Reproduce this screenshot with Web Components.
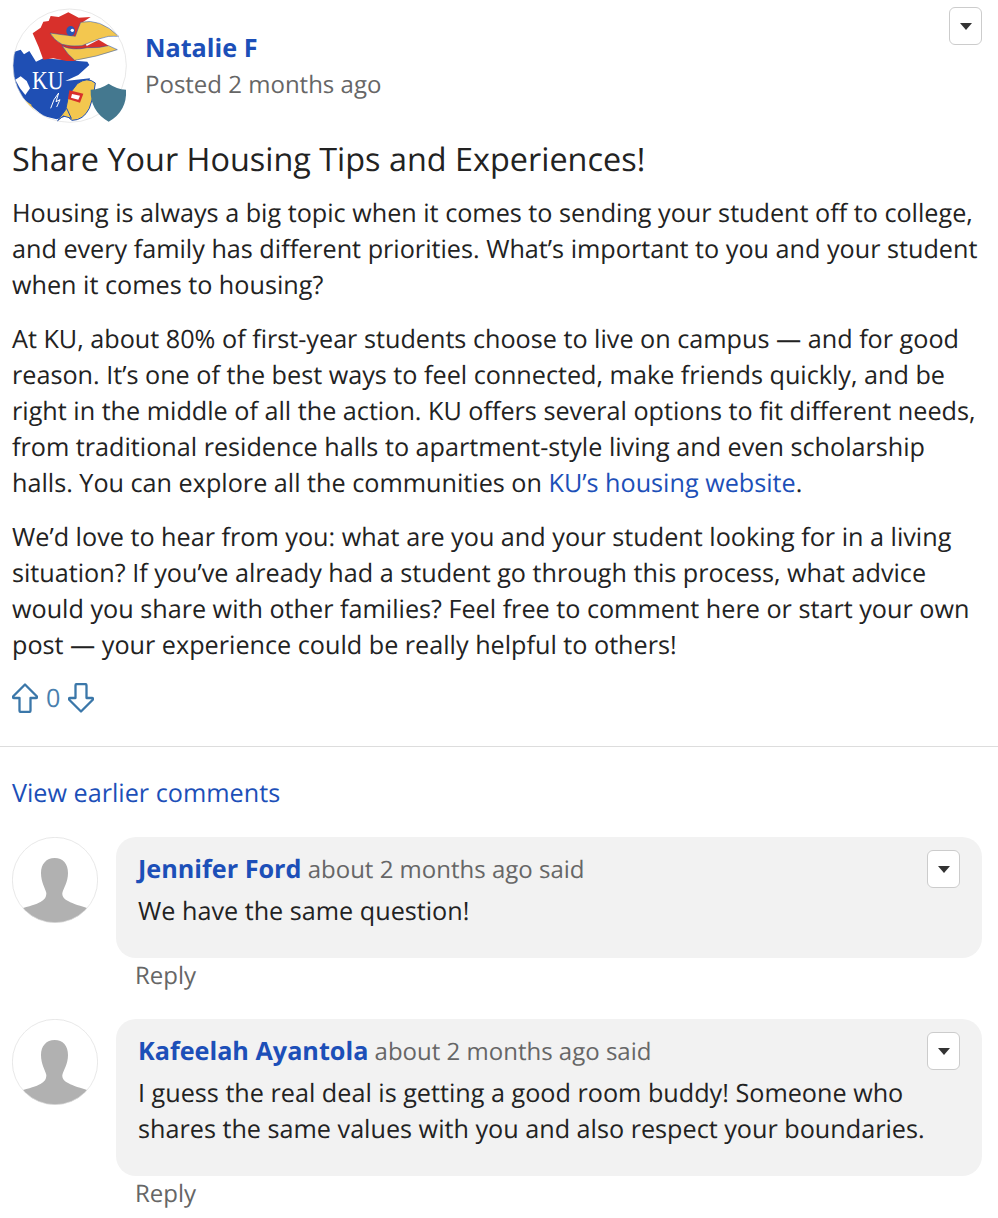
<!DOCTYPE html>
<html>
<head>
<meta charset="utf-8">
<title>Share Your Housing Tips and Experiences!</title>
<style>
  html, body { margin: 0; padding: 0; background: #fff; }
  body { font: 25.2px/36px "Open Sans", "Liberation Sans", sans-serif; color: #222; text-rendering: geometricPrecision; }
</style>
</head>
<body>

<post-view>
  <ku-avatar slot="avatar"></ku-avatar>
  <span slot="author">Natalie F</span>
  <span slot="meta">Posted 2 months ago</span>
  <span slot="title">Share Your Housing Tips and Experiences!</span>
  <p>Housing is always a big topic when it comes to sending your student off to college, and every family has different priorities. What’s important to you and your student when it comes to housing?</p>
  <p>At KU, about 80% of first-year students choose to live on campus — and for good reason. It’s one of the best ways to feel connected, make friends quickly, and be right in the middle of all the action. KU offers several options to fit different needs, from traditional residence halls to apartment-style living and even scholarship halls. You can explore all the communities on <a href="#" style="color:#1c4fb8;text-decoration:none">KU’s housing website</a>.</p>
  <p>We’d love to hear from you: what are you and your student looking for in a living situation? If you’ve already had a student go through this process, what advice would you share with other families? Feel free to comment here or start your own post — your experience could be really helpful to others!</p>
</post-view>

<comment-list>
  <comment-item author="Jennifer Ford" time="about 2 months ago said">We have the same question!</comment-item>
  <comment-item author="Kafeelah Ayantola" time="about 2 months ago said">I guess the real deal is getting a good room buddy! Someone who shares the same values with you and also respect your boundaries.</comment-item>
</comment-list>

<script>
// small dropdown button used on the post and on each comment
class MenuButton extends HTMLElement {
  constructor() {
    super();
    this.attachShadow({ mode: 'open' });
    this.shadowRoot.innerHTML = `
      <style>
        :host { display: flex; align-items: center; justify-content: center; box-sizing: border-box;
          width: 33px; height: 38px; background: #fff; border: 1px solid #ccc; border-radius: 6px; }
        i { width: 0; height: 0; border: 6.5px solid transparent; border-top: 7px solid #333; border-bottom: 0; }
      </style>
      <i></i>`;
  }
}
customElements.define('menu-button', MenuButton);

class KuAvatar extends HTMLElement {
  constructor() {
    super();
    this.attachShadow({ mode: 'open' });
    this.shadowRoot.innerHTML = `
      <style>
        :host { display: block; width: 115px; height: 115px; }
        svg { display: block; overflow: visible; }
      </style>
      <svg width="115" height="115" viewBox="36 21 345 345">
        <defs><clipPath id="c"><circle cx="209" cy="194" r="170"/></clipPath></defs>
        <circle cx="209" cy="194" r="170" fill="#fff"/>
        <g clip-path="url(#c)">
          <path fill="#1f4fb4" d="M36 155 L62 146 L72 160 L88 150 L108 182 L130 172 L262 182 L268 192 L235 222 L196 240 L270 232 L250 300 L220 340 L170 355 L130 345 L100 320 L60 285 L36 262 Z"/>
          <path fill="#fff" d="M46 236 L62 226 L80 240 L90 262 L76 282 L60 262 Z"/>
          <path fill="#f3c74f" d="M70 295 L92 310 L110 340 L86 322 Z"/>
          <path fill="none" stroke="#fff" stroke-width="3" d="M152 322 L162 296 L176 276 L168 302 L180 296 L170 318"/>
        </g>
        <path fill="#d8302b" d="M98 97 L122 80 L130 62 L146 60 L152 45 L176 48 L205 34 L236 50 L272 48 L250 62 L250 110 L262 140 L226 180 L200 180 L160 172 L130 176 L116 138 Z"/>
        <path fill="#f3c74f" stroke="#1f4fb4" stroke-width="1.5" d="M242 64 Q300 50 356 106 Q326 102 296 114 Q270 124 246 134 Q210 138 186 130 Q162 118 150 96 Q190 102 226 106 L234 84 Z"/>
        <path fill="#d8302b" d="M250 140 L296 116 L326 134 Q292 146 250 140 Z"/>
        <path fill="#f3c74f" stroke="#1f4fb4" stroke-width="1.5" d="M186 134 Q216 150 262 140 Q296 142 326 134 L352 146 Q290 168 224 178 Q202 160 186 134 Z"/>
        <ellipse cx="212" cy="90" rx="13" ry="15" fill="#2a55b4"/>
        <circle cx="217" cy="88" r="5" fill="#fff"/>
        <path fill="#f3c74f" stroke="#1f4fb4" stroke-width="3" d="M232 248 Q262 226 286 246 Q284 282 268 322 Q250 358 216 358 Q198 348 198 322 L206 282 Z"/>
        <path fill="#f3c74f" stroke="#1f4fb4" stroke-width="3" d="M200 322 L172 360 L190 345 L214 352 Z"/>
        <path fill="#d8302b" d="M208 268 L250 278 L240 305 L204 294 Z"/>
        <path fill="#fff" d="M216 279 L240 284 L235 296 L213 290 Z"/>
        <text x="143" y="265" text-anchor="middle" font-family="'Liberation Serif', serif" font-size="78" textLength="94" lengthAdjust="spacingAndGlyphs" fill="#fff">KU</text>
        <circle cx="209" cy="194" r="170" fill="none" stroke="#ddd" stroke-width="2"/>
        <path fill="#44788f" d="M326 248 Q350 264 378 266 Q382 330 326 362 Q270 330 272 266 Q302 264 326 248 Z"/>
      </svg>`;
  }
}
customElements.define('ku-avatar', KuAvatar);

// grey silhouette for users with no picture
class UserAvatar extends HTMLElement {
  constructor() {
    super();
    this.attachShadow({ mode: 'open' });
    this.shadowRoot.innerHTML = `
      <style>
        :host { display: block; flex: none; width: 86px; height: 86px; }
        svg { display: block; }
      </style>
      <svg width="86" height="86" viewBox="37 37 258 258">
        <defs><clipPath id="u"><circle cx="166" cy="166" r="128"/></clipPath></defs>
        <circle cx="166" cy="166" r="128" fill="#fff"/>
        <path clip-path="url(#u)" fill="#b1b1b1" d="M165 100 C190 100 205 118 205 145 C205 172 192 190 188 205 C187 222 200 232 262 250 L262 300 L70 300 L70 250 C128 235 140 225 140 205 C136 190 124 172 124 145 C124 118 140 100 165 100 Z"/>
        <circle cx="166" cy="166" r="128" fill="none" stroke="#ddd" stroke-width="2"/>
      </svg>`;
  }
}
customElements.define('user-avatar', UserAvatar);

class VoteBar extends HTMLElement {
  constructor() {
    super();
    this.attachShadow({ mode: 'open' });
    const arrow = 'M13 1.5 L25 13.5 Q25.5 15 24 15 L18.5 15 L18.5 27.5 Q18.5 29 17 29 L9 29 Q7.5 29 7.5 27.5 L7.5 15 L2 15 Q.5 15 1 13.5 Z';
    this.shadowRoot.innerHTML = `
      <style>
        :host { display: flex; align-items: center; height: 30px; color: #4a7fae; }
        svg { display: block; }
        span { margin: 0 8px 0 8px; line-height: 30px; }
      </style>
      <svg width="26" height="30" viewBox="0 0 26 30"><path d="${arrow}" fill="none" stroke="#3b77a9" stroke-width="2.3" stroke-linejoin="round"/></svg>
      <span>0</span>
      <svg width="26" height="30" viewBox="0 0 26 30" style="transform:rotate(180deg)"><path d="${arrow}" fill="none" stroke="#3b77a9" stroke-width="2.3" stroke-linejoin="round"/></svg>`;
  }
}
customElements.define('vote-bar', VoteBar);

class PostView extends HTMLElement {
  constructor() {
    super();
    this.attachShadow({ mode: 'open' });
    this.shadowRoot.innerHTML = `
      <style>
        :host { display: block; border-bottom: 1px solid #ddd; padding: 8px 16px 33px 12px; }
        .head { display: flex; gap: 18px; align-items: flex-start; height: 115px; }
        .who { flex: 1; padding-top: 22px; }
        .author { color: #1c4fb8; font-weight: 700; }
        .meta { color: #666; font-size: 24px; margin-top: 1px; }
        menu-button { margin-top: -1px; }
        h2 { margin: 14px 0 14px; font-weight: 400; font-size: 32.4px; line-height: 44px; color: #222; }
        ::slotted(p) { margin: 0 0 18px; }
        vote-bar { margin-top: 20px; }
      </style>
      <div class="head">
        <slot name="avatar"></slot>
        <div class="who">
          <div class="author"><slot name="author"></slot></div>
          <div class="meta"><slot name="meta"></slot></div>
        </div>
        <menu-button></menu-button>
      </div>
      <h2><slot name="title"></slot></h2>
      <slot></slot>
      <vote-bar></vote-bar>`;
  }
}
customElements.define('post-view', PostView);

class CommentList extends HTMLElement {
  constructor() {
    super();
    this.attachShadow({ mode: 'open' });
    this.shadowRoot.innerHTML = `
      <style>
        :host { display: block; padding: 28px 16px 0 12px; }
        a { display: block; color: #1c4fb8; text-decoration: none; margin-bottom: 26px; }
        .items { display: flex; flex-direction: column; gap: 25px; }
      </style>
      <a href="#">View earlier comments</a>
      <div class="items"><slot></slot></div>`;
  }
}
customElements.define('comment-list', CommentList);

class CommentItem extends HTMLElement {
  constructor() {
    super();
    this.attachShadow({ mode: 'open' });
    this.shadowRoot.innerHTML = `
      <style>
        :host { display: flex; gap: 18px; align-items: flex-start; }
        .main { flex: 1; min-width: 0; }
        .bubble { position: relative; box-sizing: border-box; min-height: 121px; background: #f2f2f2;
          border-radius: 20px; padding: 14px 22px 29px; }
        .line { margin-bottom: 5px; color: #666; font-size: 24px; }
        b { color: #1c4fb8; font-weight: 700; font-size: 25.2px; }
        menu-button { position: absolute; top: 13px; right: 22px; }
        .reply { color: #666; font-size: 24px; margin: 0 0 0 19px; height: 36px; }
      </style>
      <user-avatar></user-avatar>
      <div class="main">
        <div class="bubble">
          <menu-button></menu-button>
          <div class="line"><b>${this.getAttribute('author')}</b> ${this.getAttribute('time')}</div>
          <slot></slot>
        </div>
        <div class="reply">Reply</div>
      </div>`;
  }
}
customElements.define('comment-item', CommentItem);
</script>
</body>
</html>
